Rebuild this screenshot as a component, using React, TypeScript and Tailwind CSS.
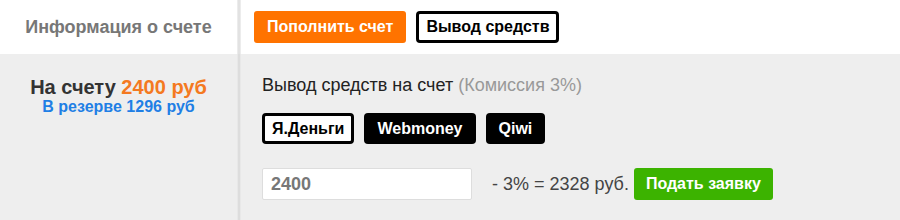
export default function App() {
  return (
    <div className="flex h-[220px] w-[900px] flex-col bg-[#eeeeee] font-['Liberation_Sans',Arial,sans-serif]">
      <div className="flex h-[54px] bg-white">
        <div className="flex w-[237px] items-center justify-center text-[18px] font-bold text-[#777777]">
          Информация о счете
        </div>
        <div className="w-[4px] border-x border-[#ececec] bg-[#e2e2e2]" />
        <div className="flex flex-1 items-center gap-[10px] pl-[13px]">
          <button className="h-[32px] rounded-[3px] bg-[#ff7300] px-[13px] text-[16px] font-bold text-white">
            Пополнить счет
          </button>
          <button className="h-[32px] rounded-[4px] border-[3px] border-black bg-white px-[7px] text-[16px] font-bold text-black">
            Вывод средств
          </button>
        </div>
      </div>
      <div className="flex flex-1">
        <div className="flex w-[237px] flex-col items-center pt-[21px] font-bold">
          <div className="text-[20px] leading-[24px] text-[#333333]">
            На счету <span className="text-[#f47920]">2400 руб</span>
          </div>
          <div className="text-[16px] leading-[16px] text-[#1f7fe5]">В резерве 1296 руб</div>
        </div>
        <div className="w-[4px] border-x border-[#e8e8e8] bg-[#dddddd]" />
        <div className="flex flex-1 flex-col pl-[21px] pt-[20px]">
          <div className="text-[18px] leading-[22px] text-[#222222]">
            Вывод средств на счет <span className="text-[#999999]">(Комиссия 3%)</span>
          </div>
          <div className="mt-[17px] flex gap-[10px]">
            <button className="h-[31px] rounded-[4px] border-[3px] border-black bg-white px-[7px] text-[16px] font-bold text-black">
              Я.Деньги
            </button>
            <button className="h-[31px] rounded-[4px] bg-black px-[13px] text-[16px] font-bold text-white">
              Webmoney
            </button>
            <button className="h-[31px] rounded-[4px] bg-black px-[13px] text-[16px] font-bold text-white">
              Qiwi
            </button>
          </div>
          <div className="mt-[24px] flex items-center">
            <input
              defaultValue="2400"
              className="h-[32px] w-[210px] rounded-[2px] border border-[#dddddd] bg-white px-[8px] text-[18px] font-bold text-[#777777] outline-none"
            />
            <span className="ml-[20px] text-[18px] text-[#444444]">- 3% = 2328 руб.</span>
            <button className="ml-[5px] h-[32px] rounded-[3px] bg-[#3cb300] px-[12px] text-[16px] font-bold text-white">
              Подать заявку
            </button>
          </div>
        </div>
      </div>
    </div>
  )
}
